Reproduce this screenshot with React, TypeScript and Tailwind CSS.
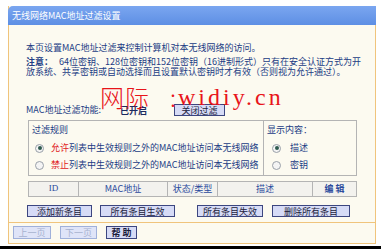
import React from 'react';

const cjk = { fontFamily: '"Noto Sans CJK SC", "Liberation Sans", sans-serif' };

function Radio({ checked }: { checked?: boolean }) {
  return (
    <span className="flex h-[9px] w-[9px] items-center justify-center rounded-full border border-[#9aa0a8] bg-[#f4f4f4]">
      {checked && <span className="h-[4px] w-[4px] rounded-full bg-[#2f5a4e]" />}
    </span>
  );
}

function Btn({ label, width, disabled, bold }: { label: string; width: number; disabled?: boolean; bold?: boolean }) {
  return (
    <button
      style={{ width }}
      className={`flex h-full items-center justify-center border text-[9px] leading-none ${
        disabled
          ? 'border-[#9fb0da] bg-[#dfe4f8] text-[#a7b2cf]'
          : 'border-[#3c4680] bg-[#d6dbf6] text-[#1c1c3a]'
      } ${bold ? 'font-semibold' : ''}`}
    >
      {label}
    </button>
  );
}

export default function App() {
  return (
    <div className="relative flex h-[249px] w-[381px] flex-col bg-white text-[#223c84]" style={cjk}>
      <div className="ml-[8px] mt-[6px] flex h-[238px] w-[368px] flex-col border-x border-b border-[#f0c47c] bg-[#fcfaf0]">
        {/* title bar */}
        <div className="-mx-px flex h-[19px] items-center rounded-tl-[5px] bg-gradient-to-b from-[#7aa6f0] to-[#5e8fe4] pl-[4px] text-[9px] text-white">
          无线网络MAC地址过滤设置
        </div>

        {/* intro */}
        <div className="mt-[18px] pl-[17px] text-[9px]">
          <div className="h-[10px] leading-[10px]">本页设置MAC地址过滤来控制计算机对本无线网络的访问。</div>
          <div className="mt-[4px] flex h-[10px] whitespace-nowrap leading-[10px]">
            <span className="w-[33px] font-bold">注意：</span>
            <span>64位密钥、128位密钥和152位密钥（16进制形式）只有在安全认证方式为开</span>
          </div>
          <div className="h-[10px] whitespace-nowrap leading-[10px]">
            放系统、共享密钥或自动选择而且设置默认密钥时才有效（否则视为允许通过）。
          </div>
        </div>

        {/* filter switch */}
        <div className="mt-[27px] flex h-[12px] items-center pl-[17px] text-[9px]">
          <span className="w-[94px]">MAC地址过滤功能:</span>
          <span className="mt-[2px] font-bold text-[#1c2a60]">已开启</span>
          <div className="ml-[27px] h-[12px]">
            <Btn label="关闭过滤" width={51} />
          </div>
        </div>

        {/* rules box */}
        <div className="ml-[19px] mt-[4px] flex h-[56px] w-[329px] border border-[#b4b4b4] text-[9px]">
          <div className="flex w-[235px] flex-col border-r border-[#b4b4b4]">
            <div className="mt-[4px] h-[10px] pl-[3px] leading-[10px]">过滤规则</div>
            <div className="mt-[7px] flex h-[12px] items-center pl-[6px]">
              <Radio checked />
              <span className="ml-[7px]">
                <span className="text-[#e0201a]">允许</span>列表中生效规则之外的MAC地址访问本无线网络
              </span>
            </div>
            <div className="mt-[5px] flex h-[12px] items-center pl-[6px]">
              <Radio />
              <span className="ml-[7px]">
                <span className="text-[#e0201a]">禁止</span>列表中生效规则之外的MAC地址访问本无线网络
              </span>
            </div>
          </div>
          <div className="flex flex-1 flex-col">
            <div className="mt-[4px] h-[10px] pl-[3px] leading-[10px]">显示内容：</div>
            <div className="mt-[7px] flex h-[12px] items-center pl-[8px]">
              <Radio checked />
              <span className="ml-[9px]">描述</span>
            </div>
            <div className="mt-[5px] flex h-[12px] items-center pl-[8px]">
              <Radio />
              <span className="ml-[9px]">密钥</span>
            </div>
          </div>
        </div>

        {/* table header */}
        <div className="ml-[19px] mt-[5px] flex h-[16px] w-[329px] border border-[#b4b4b4] bg-[#f3f2ee] text-[9px] text-[#2a4a9c]">
          <div className="flex w-[50px] items-center justify-center border-r border-[#b4b4b4]" style={{ fontFamily: '"Liberation Serif", serif' }}>ID</div>
          <div className="flex w-[89px] items-center justify-center border-r border-[#b4b4b4]">MAC地址</div>
          <div className="flex w-[50px] items-center justify-center border-r border-[#b4b4b4]">状态/类型</div>
          <div className="flex w-[95px] items-center justify-center border-r border-[#b4b4b4]">描述</div>
          <div className="flex flex-1 items-center justify-center font-bold">编 辑</div>
        </div>

        {/* action buttons */}
        <div className="mt-[8px] flex h-[12px] pl-[18px]">
          <Btn label="添加新条目" width={65} />
          <div className="ml-[8px] h-full">
            <Btn label="所有条目生效" width={75} />
          </div>
          <div className="ml-[22px] h-full">
            <Btn label="所有条目失效" width={66} />
          </div>
          <div className="ml-[9px] h-full">
            <Btn label="删除所有条目" width={78} />
          </div>
        </div>

        <div className="mt-[5px] h-px bg-[#f0c47c]" />

        {/* paging */}
        <div className="mt-[3px] flex h-[13px] pl-[4px]">
          <Btn label="上一页" width={38} disabled />
          <div className="ml-[9px] h-full">
            <Btn label="下一页" width={37} disabled />
          </div>
          <div className="ml-[9px] h-full">
            <Btn label="帮 助" width={31} bold />
          </div>
        </div>
      </div>

      <div className="mt-auto h-[3px] bg-black" />

      {/* watermark */}
      <div className="pointer-events-none absolute left-[100px] top-[85px] flex items-end text-[#e8141a]">
        <span className="text-[24px] font-light leading-none tracking-[1px]">网际</span>
        <span className="ml-[20px] text-[24px] font-light leading-none">:</span>
        <span
          className="ml-[2px] text-[24px] leading-none tracking-[3px]"
          style={{ fontFamily: '"Liberation Serif", serif' }}
        >
          widiy.cn
        </span>
      </div>
    </div>
  );
}
